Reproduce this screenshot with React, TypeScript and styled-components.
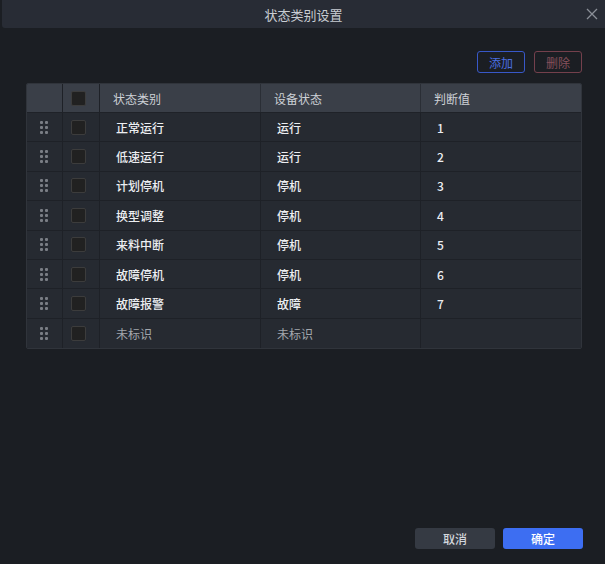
import { FC } from 'react'
import styled, { createGlobalStyle } from 'styled-components'

const GlobalStyle = createGlobalStyle`
  html, body {
    margin: 0;
    padding: 0;
    background: #1b1e23;
  }
  body {
    font-family: "Noto Sans CJK SC", "Noto Sans", sans-serif;
  }
`

type Row = { category: string; device: string; value: string; muted?: boolean }

const rows: Row[] = [
    { category: '正常运行', device: '运行', value: '1' },
    { category: '低速运行', device: '运行', value: '2' },
    { category: '计划停机', device: '停机', value: '3' },
    { category: '换型调整', device: '停机', value: '4' },
    { category: '来料中断', device: '停机', value: '5' },
    { category: '故障停机', device: '停机', value: '6' },
    { category: '故障报警', device: '故障', value: '7' },
    { category: '未标识', device: '未标识', value: '', muted: true },
]

const App: FC = () => {
    return (<Dialog>
        <GlobalStyle />
        <Header>
            <Title>状态类别设置</Title>
            <Close aria-label="close">
                <svg width="12" height="12" viewBox="0 0 12 12">
                    <path d="M1 1 L11 11 M11 1 L1 11" stroke="#8a8f97" strokeWidth="1.3" fill="none" />
                </svg>
            </Close>
        </Header>
        <Body>
            <Toolbar>
                <OutlineButton $tone="add">添加</OutlineButton>
                <OutlineButton $tone="del">删除</OutlineButton>
            </Toolbar>
            <Table>
                <HeadRow>
                    <Cell />
                    <BoxCell><Check /></BoxCell>
                    <HeadText>状态类别</HeadText>
                    <HeadText>设备状态</HeadText>
                    <HeadText>判断值</HeadText>
                </HeadRow>
                {
                    rows.map(r =>
                        <BodyRow key={ r.category }>
                            <Cell><Dots>{ Array.from({ length: 6 }).map((_, i) => <Dot key={ i } />) }</Dots></Cell>
                            <BoxCell><Check /></BoxCell>
                            <Text $muted={ r.muted }>{ r.category }</Text>
                            <Text $muted={ r.muted }>{ r.device }</Text>
                            <Text $muted={ r.muted }>{ r.value }</Text>
                        </BodyRow>
                    )
                }
            </Table>
        </Body>
        <Footer>
            <FooterButton $primary={ false }>取消</FooterButton>
            <FooterButton $primary>确定</FooterButton>
        </Footer>
    </Dialog>)
}

const Dialog = styled.div`
  width: 605px;
  height: 564px;
  display: flex;
  flex-direction: column;
  background: #1b1e23;
`

const Header = styled.div`
  height: 28px;
  margin-left: 2px;
  border-bottom-left-radius: 3px;
  background: #282c35;
  display: flex;
  align-items: center;
  justify-content: center;
  position: relative;
`

const Title = styled.div`
  font-size: 13px;
  color: #c9cdd3;
`

const Close = styled.div`
  position: absolute;
  right: 7px;
  top: 8px;
  display: flex;
`

const Body = styled.div`
  flex: 1;
  padding: 23px 23px 0 26px;
  display: flex;
  flex-direction: column;
`

const Toolbar = styled.div`
  display: flex;
  justify-content: flex-end;
  gap: 9px;
  margin-bottom: 10px;
`

const OutlineButton = styled.div<{ $tone: 'add' | 'del' }>`
  width: 48px;
  height: 22px;
  box-sizing: border-box;
  border: 1px solid ${p => p.$tone === 'add' ? '#3858c8' : '#74404c'};
  color: ${p => p.$tone === 'add' ? '#4a6ee0' : '#87505b'};
  border-radius: 3px;
  font-size: 12px;
  display: flex;
  align-items: center;
  justify-content: center;
`

const Table = styled.div`
  width: 556px;
  border: 1px solid #30343b;
  border-radius: 2px;
  overflow: hidden;
  box-sizing: border-box;
`

const grid = `
  display: grid;
  grid-template-columns: 36px 37px 161px 160px 1fr;
`

const HeadRow = styled.div`
  ${grid};
  height: 29px;
  background: #3a3f48;
  border-bottom: 1px solid #1f2228;
  box-sizing: border-box;
`

const BodyRow = styled.div`
  ${grid};
  height: 29.4px;
  background: #262a31;
  border-bottom: 1px solid #1e2127;
  box-sizing: border-box;
  &:last-child {
    border-bottom: none;
  }
`

const Cell = styled.div`
  display: flex;
  align-items: center;
  justify-content: center;
  border-right: 1px solid #1e2127;
`

const BoxCell = styled(Cell)`
  justify-content: flex-start;
  padding-left: 8px;
`

const Check = styled.div`
  width: 15px;
  height: 15px;
  box-sizing: border-box;
  background: #212121;
  border: 1px solid #3c3c3c;
  border-radius: 2px;
`

const Dots = styled.div`
  display: grid;
  grid-template-columns: 3px 3px;
  grid-auto-rows: 3px;
  column-gap: 2px;
  row-gap: 2px;
  margin-left: -2px;
`

const Dot = styled.span`
  width: 3px;
  height: 3px;
  border-radius: 1px;
  background: #7a7e85;
`

const HeadText = styled.div`
  display: flex;
  align-items: center;
  padding-left: 13px;
  font-size: 12px;
  color: #cdd1d6;
  border-right: 1px solid #2a2e35;
  &:last-child {
    border-right: none;
  }
`

const Text = styled.div<{ $muted?: boolean }>`
  display: flex;
  align-items: center;
  padding-left: 16px;
  font-size: 12px;
  font-weight: ${p => p.$muted ? 400 : 500};
  color: ${p => p.$muted ? '#a3a7ad' : '#eceef1'};
  border-right: 1px solid #1e2127;
  &:last-child {
    border-right: none;
  }
`

const Footer = styled.div`
  display: flex;
  justify-content: flex-end;
  gap: 8px;
  padding: 0 22px 15px 0;
`

const FooterButton = styled.div<{ $primary: boolean }>`
  width: 80px;
  height: 21px;
  border-radius: 3px;
  background: ${p => p.$primary ? '#3d6ef2' : '#353a43'};
  color: ${p => p.$primary ? '#ffffff' : '#d2d6dc'};
  font-size: 12px;
  font-weight: 500;
  display: flex;
  align-items: center;
  justify-content: center;
`

export default App
